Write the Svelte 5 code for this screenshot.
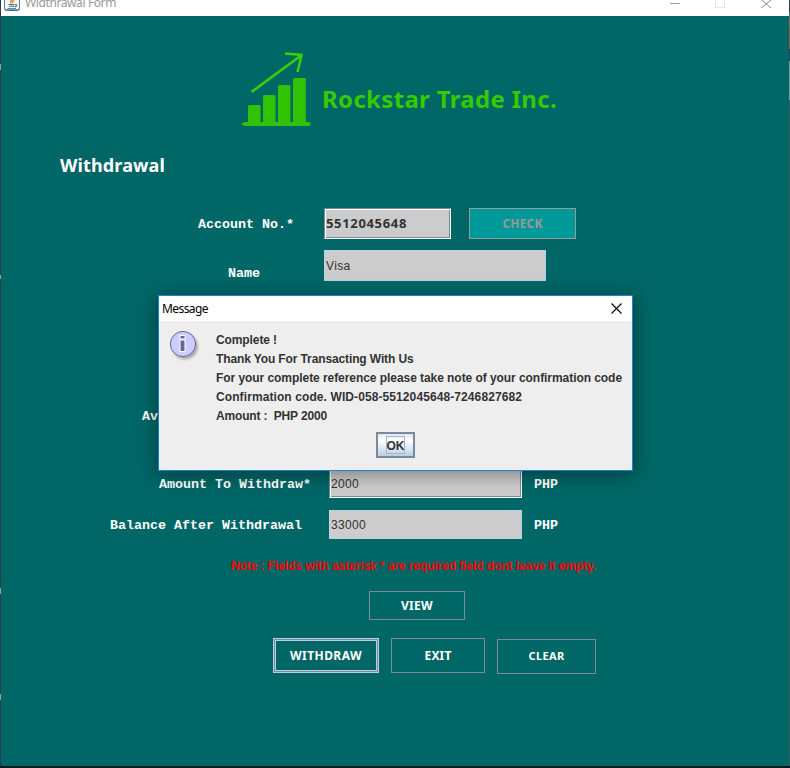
<script>
  // Spread the letters of a label so that it takes up the given width.
  function fit(node, width) {
    const range = document.createRange();
    range.selectNodeContents(node);
    const natural = range.getBoundingClientRect().width;
    const count = node.textContent.length;
    if (count > 1) node.style.letterSpacing = `${(width - natural) / count}px`;
  }

  const message = [
    ['Complete !', 61],
    ['Thank You For Transacting With Us', 197.5],
    ['For your complete reference please take note of your confirmation code', 406],
    ['Confirmation code. WID-058-5512045648-7246827682', 306],
    ['Amount :  PHP 2000', 111]
  ];
</script>

<div class="screen">
  <header class="titlebar">
    <svg class="java" width="16" height="11" viewBox="0 0 16 11">
      <path d="M.5 0v8.5q0 2 2 2h11q2 0 2-2V0" fill="#f4f7f9" stroke="#5f7f97" />
      <path d="M1 8.5q0 1.5 2 1.5h10q2 0 2-1.5" fill="none" stroke="#315f80" />
      <path d="M8.5 0Q5.5 1 7.5 3.5M10 0Q8 1.5 8.8 3" fill="none" stroke="#f58219" stroke-width="1.3" />
      <path d="M4.5 4.5h6M5 6.3h5.5M11 4.5q2.5 0 1.5 1.3L11 6.8M3.5 8.3q4 1.2 8.5 0" fill="none" stroke="#44708f" stroke-width="1.1" />
    </svg>
    <span class="caption"><span use:fit={91}>Widthrawal Form</span></span>
    <svg class="controls" width="103" height="10" viewBox="0 0 103 10" shape-rendering="crispEdges">
      <path d="M0 3.5h10" stroke="#999" />
      <path d="M45.5 0v7.5h9V0" fill="none" stroke="#e5e5e5" />
      <path d="M92 0l9 8M101 0l-10 8" stroke="#8c8c8c" shape-rendering="auto" />
    </svg>
  </header>

  <main>
    <div class="brand">
      <svg width="72" height="79" viewBox="0 0 72 79" fill="#2fc303">
        <rect x="8" y="55" width="12.5" height="20" rx="1.5" />
        <rect x="23" y="45" width="12.5" height="30" rx="1.5" />
        <rect x="38" y="35" width="12.5" height="40" rx="1.5" />
        <rect x="53" y="28" width="12.8" height="47" rx="1.5" />
        <path d="M1 74.2l4-2.2h64l1.5 1v2l-1.5 1H5z" />
        <path d="M11.5 42L61 5.5M45 3.5L61.5 5 57.5 22" fill="none" stroke="#35d008" stroke-width="2.6" />
      </svg>
      <h1><span use:fit={235}>Rockstar Trade Inc.</span></h1>
    </div>
    <h2><span use:fit={105}>Withdrawal</span></h2>

    <div class="row account">
      <label for="account"><span use:fit={96}>Account No.*</span></label>
      <div id="account" class="field editable strong"><span use:fit={81}>5512045648</span></div>
      <button class="check"><span use:fit={40}>CHECK</span></button>
    </div>
    <div class="row name">
      <label for="name"><span use:fit={32}>Name</span></label>
      <div id="name" class="field"><span use:fit={24.5}>Visa</span></div>
    </div>
    <div class="row available">
      <label for="available"><span use:fit={136}>Available Balance</span></label>
      <div id="available" class="field"></div>
    </div>
    <div class="row amount">
      <label for="amount"><span use:fit={152}>Amount To Withdraw*</span></label>
      <div id="amount" class="field editable"><span use:fit={28}>2000</span></div>
      <span class="unit"><span use:fit={24}>PHP</span></span>
    </div>
    <div class="row balance">
      <label for="balance"><span use:fit={192}>Balance After Withdrawal</span></label>
      <div id="balance" class="field"><span use:fit={35}>33000</span></div>
      <span class="unit"><span use:fit={24}>PHP</span></span>
    </div>

    <p class="note"><span use:fit={365}>Note : Fields with asterisk * are required field dont leave it empty.</span></p>
    <button class="view"><span use:fit={32}>VIEW</span></button>
    <div class="actions">
      <button class="withdraw"><span use:fit={72}>WITHDRAW</span></button>
      <button class="exit"><span use:fit={27}>EXIT</span></button>
      <button class="clear"><span use:fit={36}>CLEAR</span></button>
    </div>
  </main>

  <div class="edge left"><i></i><i></i><i></i><i></i></div>
  <div class="edge right"></div>

  <section class="dialog" role="alertdialog" aria-label="Message">
    <div class="dialog-title">
      <span use:fit={46}>Message</span>
      <svg width="11" height="11" viewBox="0 0 11 11"><path d="M.5.5l10 10M10.5.5l-10 10" stroke="#000" stroke-width="1.1" /></svg>
    </div>
    <div class="dialog-body">
      <svg class="info" width="32" height="32" viewBox="0 0 32 32">
        <defs>
          <filter id="soft" x="-20%" y="-20%" width="140%" height="140%"><feGaussianBlur stdDeviation="1.1" /></filter>
        </defs>
        <circle cx="16" cy="16.5" r="13" fill="#999" opacity=".75" filter="url(#soft)" />
        <circle cx="14" cy="14" r="12.6" fill="#ccf" stroke="#669" />
        <path d="M11 5.5h5v3.5h-5zM11 10h5v11.5h-5z" fill="#669" stroke="#fff" />
      </svg>
      <div class="lines">
        {#each message as [text, width]}
          <div><span use:fit={width}>{text}</span></div>
        {/each}
      </div>
    </div>
    <button class="ok"><span class="focus"><span use:fit={18}>OK</span></span></button>
  </section>
</div>

<style>
  :global(body) { margin: 0; overflow: hidden; }
  * { box-sizing: border-box; }
  .screen {
    position: relative; width: 790px; height: 768px; overflow: hidden;
    background: #006666; border-bottom: 2px solid #061b1d;
    font-family: 'Liberation Sans', Arial, sans-serif; color: #fff;
  }
  span { white-space: pre; }
  .titlebar {
    height: 16px; background: #fff; display: flex; align-items: flex-start;
    padding-left: 4px; color: #999;
  }
  .java { flex: none; }
  .caption { font: 12px/16px 'Noto Sans', sans-serif; margin: -5px 0 0 5px; width: 101px; }
  .controls { margin-left: 544px; flex: none; }

  main { display: flex; flex-direction: column; align-items: flex-start; }
  .brand { display: flex; margin: 34px 0 0 240px; height: 79px; }
  h1 { margin: 32px 0 0 10px; font: bold 24px/34px 'Noto Sans', sans-serif; color: #33cc00; }
  h2 { margin: 23px 0 0 60px; font: bold 18px/26px 'Noto Sans', sans-serif; }

  .row { display: flex; }
  label, .unit { font: bold 13.33px/16px 'Liberation Mono', 'Courier New', monospace; }
  label { flex: none; }
  .field {
    display: flex; align-items: center; padding-left: 1px;
    background: #ccc; border: 1px solid #b8cfe5; color: #333; font-size: 12px;
  }
  .field.editable { border: 1px solid #fff; border-top-color: #7a8a99; border-left-color: #7a8a99; box-shadow: inset 1px 1px #fff, inset -1px -1px #7a8a99; }
  .field.strong { font: bold 13px/17px 'Noto Sans', sans-serif; padding-bottom: 1px; }

  .account { margin: 30px 0 0 198px; height: 31px; }
  .account label { width: 126px; padding-top: 9px; }
  .account .field { width: 127px; margin-right: 18px; }
  .name { margin: 11px 0 0 228px; height: 31px; }
  .name label { width: 96px; padding-top: 16px; }
  .name .field { width: 222px; }
  .available { margin: 121px 0 0 142px; height: 29px; }
  .available label { width: 187px; padding-top: 7px; }
  .available .field { width: 193px; }
  .amount { margin: 38px 0 0 159px; height: 29px; }
  .amount label { width: 170px; padding-top: 8px; }
  .amount .field, .balance .field { width: 193px; margin-right: 12px; }
  .amount .unit { padding-top: 8px; }
  .balance { margin: 12px 0 0 110px; height: 29px; }
  .balance label { width: 219px; padding-top: 8px; }
  .balance .unit { padding-top: 8px; }

  .note { margin: 19px 0 0 231px; font: bold 12px/16px 'Liberation Sans', sans-serif; color: #f00; }
  button {
    display: flex; align-items: center; justify-content: center; padding: 0;
    background: none; border: 1px solid #7a8a99; border-radius: 0; color: #fff;
    font: bold 12px/16px 'Noto Sans', sans-serif;
  }
  .check { width: 107px; height: 31px; background: #009999; border-color: #999; color: #999; }
  .view { margin: 17px 0 0 369px; width: 96px; height: 29px; }
  .actions { display: flex; gap: 12px; margin: 18px 0 0 273px; align-items: flex-start; }
  .withdraw { width: 106px; height: 35px; border-color: #b8cfe5; box-shadow: inset 0 0 0 1px #7a8a99, inset 0 0 0 2px #b8cfe5; }
  .exit { width: 94px; height: 35px; }
  .clear { width: 99px; height: 35px; margin-top: 1px; padding-bottom: 2px; font-size: 11px; }

  .edge { position: absolute; top: 0; bottom: 0; width: 1px; background: #303c4c; }
  .left { left: 0; }
  .left i { position: absolute; left: 0; width: 1px; height: 6px; background: #87a792; }
  .left i:nth-child(1) { top: 64px; }
  .left i:nth-child(2) { top: 275px; height: 4px; }
  .left i:nth-child(3) { top: 588px; }
  .left i:nth-child(4) { top: 694px; }
  .right { right: 0; background: linear-gradient(#303c4c 0 12px, #397d94 12px 18px, #8b7641 18px 28px, #9b5944 28px 49px, #263f50 49px 61px, #819d9c 61px 100px, #3b5961 100px); }

  .dialog {
    position: absolute; left: 158px; top: 295px; width: 475px; height: 176px;
    background: #eee; border: 1px solid #1883d7; color: #333;
    box-shadow: 0 3px 17px 1px rgba(0, 0, 0, .38);
  }
  .dialog-title {
    display: flex; align-items: center; justify-content: space-between;
    height: 25px; padding: 0 10px 0 3px; background: #fff; color: #000;
    font: 12px/16px 'Noto Sans', sans-serif;
  }
  .dialog-body { display: flex; padding: 9px 0 0 10px; }
  .info { flex: none; margin-right: 15px; }
  .lines { font: bold 12px/19px 'Liberation Sans', sans-serif; padding-top: 1px; }
  .lines div { height: 19px; }
  .ok {
    width: 39px; height: 26px; margin: 6px 0 0 217px; color: #333;
    font: bold 12px/18px 'Liberation Sans', sans-serif;
    border: 2px solid #7a8a99; background: linear-gradient(#dce7f1, #fff 30%, #b8cfe5);
  }
  .focus { display: flex; justify-content: center; width: 19px; height: 18px; border: 1px solid #a3b8cc; }
</style>
